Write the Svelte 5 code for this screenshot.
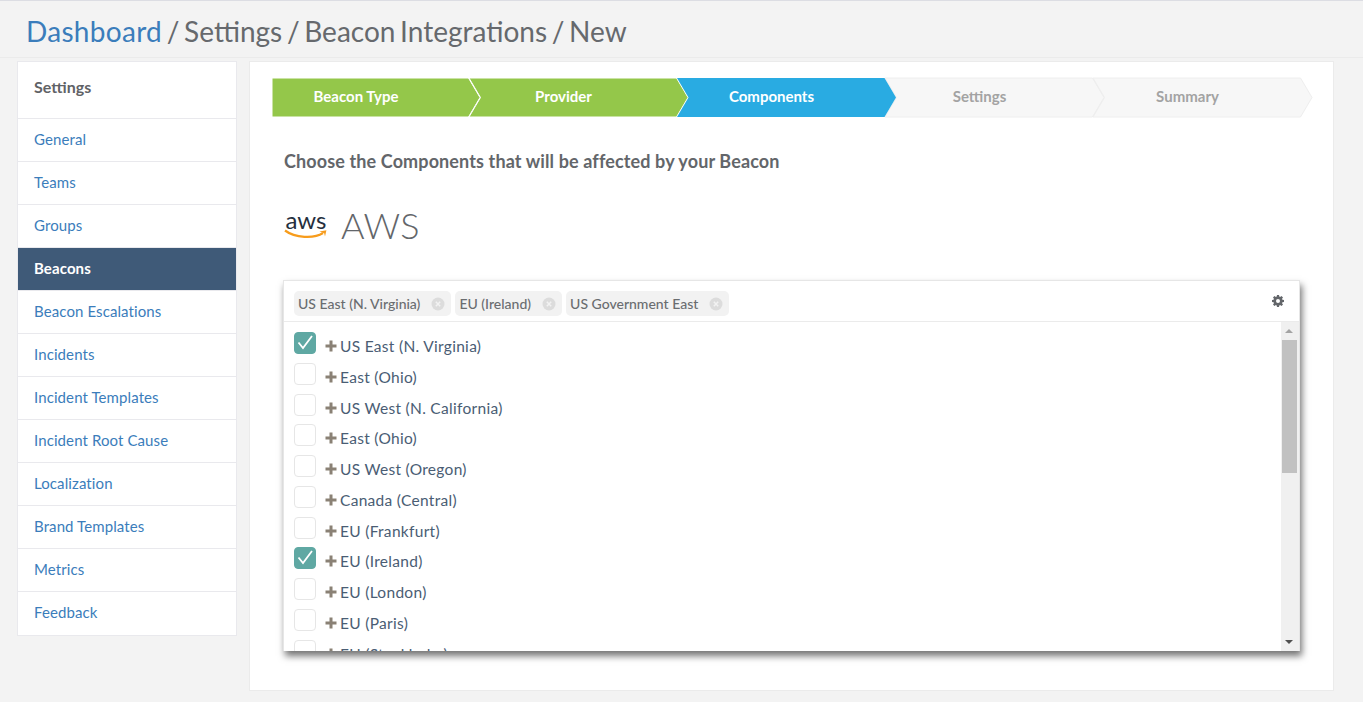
<script lang="ts">
  const navItems = ['General', 'Teams', 'Groups', 'Beacons', 'Beacon Escalations', 'Incidents', 'Incident Templates', 'Incident Root Cause', 'Localization', 'Brand Templates', 'Metrics', 'Feedback'];
  const steps = [
    { label: 'Beacon Type', state: 'done' },
    { label: 'Provider', state: 'done' },
    { label: 'Components', state: 'active' },
    { label: 'Settings', state: 'todo' },
    { label: 'Summary', state: 'todo' }
  ];
  const tags = ['US East (N. Virginia)', 'EU (Ireland)', 'US Government East'];
  const regions = [
    { name: 'US East (N. Virginia)', checked: true },
    { name: 'East (Ohio)', checked: false },
    { name: 'US West (N. California)', checked: false },
    { name: 'East (Ohio)', checked: false },
    { name: 'US West (Oregon)', checked: false },
    { name: 'Canada (Central)', checked: false },
    { name: 'EU (Frankfurt)', checked: false },
    { name: 'EU (Ireland)', checked: true },
    { name: 'EU (London)', checked: false },
    { name: 'EU (Paris)', checked: false },
    { name: 'EU (Stockholm)', checked: false }
  ];
</script>

<header class="page-header">
  <h1><a href="#top">Dashboard</a> / Settings / Beacon Integrations / New</h1>
</header>

<div class="layout">
  <aside class="sidebar">
    <div class="sidebar-title">Settings</div>
    {#each navItems as item}
      <a class="nav-item" class:active={item === 'Beacons'} href="#top">{item}</a>
    {/each}
  </aside>

  <main class="card">
    <ol class="steps">
      {#each steps as step, i}
        <li class="step {step.state}" class:first={i === 0}>
          {#if i === 0}
            <svg class="shape" viewBox="0 0 208 39" aria-hidden="true">
              <polygon points="0,0 196.5,0 208,19.5 196.5,39 0,39" />
            </svg>
          {:else}
            <svg class="shape" viewBox="0 0 219 39" aria-hidden="true">
              <polygon points="0,0 207.5,0 219,19.5 207.5,39 0,39 11.5,19.5" />
            </svg>
          {/if}
          <span>{step.label}</span>
        </li>
      {/each}
    </ol>

    <h2 class="prompt">Choose the Components that will be affected by your Beacon</h2>

    <div class="provider">
      <div class="aws-logo">
        <span>aws</span>
        <svg viewBox="0 0 44 12" aria-hidden="true">
          <path class="smile" d="M1 1.5C11 9 30 10 39 4" />
          <path class="arrow" d="M35.5 2.6L42.4 1.2 41 7.6 40.2 4.2z" />
        </svg>
      </div>
      <div class="provider-name">AWS</div>
    </div>

    <div class="picker">
      <div class="picker-head">
        <div class="tags">
          {#each tags as tag}
            <span class="tag">{tag}
              <svg viewBox="0 0 14 14" aria-hidden="true">
                <circle cx="7" cy="7" r="6.5" />
                <path d="M4.8 4.8l4.4 4.4M9.2 4.8l-4.4 4.4" />
              </svg>
            </span>
          {/each}
        </div>
        <svg class="gear" viewBox="0 0 24 24" aria-hidden="true">
          <path d="M10 0h4l.6 3.2 1.7.7L19 2l3 3-1.900 2.700.7 1.700L24 10v4l-3.200.6-.7 1.700L22 19l-3 3-2.700-1.900-1.700.7L14 24h-4l-.6-3.200-1.700-.7L5 22l-3-3 1.900-2.700-.7-1.700L0 14v-4l3.200-.6.7-1.700L2 5l3-3 2.700 1.900 1.700-.7zM12 8a4 4 0 1 0 0 8 4 4 0 0 0 0-8z" fill-rule="evenodd" />
        </svg>
      </div>
      <div class="picker-body">
        <ul class="regions">
          {#each regions as region}
            <li class="region">
              <span class="check" class:checked={region.checked}>
                {#if region.checked}
                  <svg viewBox="0 0 22 22" aria-hidden="true"><path d="M4.5 10.5l4.500 5.500 9-12" /></svg>
                {/if}
              </span>
              <svg class="plus" viewBox="0 0 12 12" aria-hidden="true"><path d="M4.5 .5h3v4h4v3h-4v4h-3v-4h-4v-3h4z" /></svg>
              <span class="region-name">{region.name}</span>
            </li>
          {/each}
        </ul>
        <div class="scrollbar">
          <i class="arrow-up"></i>
          <b class="thumb"></b>
          <i class="arrow-down"></i>
        </div>
      </div>
    </div>
  </main>
</div>

<style>
  :global(body) {
    margin: 0;
    background: #f3f3f3;
    font-family: Lato, "Open Sans", sans-serif;
    color: #5f6266;
  }

  a {
    text-decoration: none;
  }

  .page-header {
    height: 58px;
    box-sizing: border-box;
    border-top: 1px solid #dcdde3;
    border-bottom: 1px solid #ebebeb;
    padding: 11px 26px 0;
  }

  h1 {
    margin: 0;
    font-size: 28px;
    line-height: 38px;
    font-weight: 400;
    color: #66696d;
    word-spacing: -2.5px;
  }

  h1 a {
    color: #3b7dbb;
    letter-spacing: 0.3px;
  }

  .layout {
    display: flex;
    align-items: flex-start;
    gap: 12px;
    padding: 3px 29px 0 17px;
  }

  .sidebar {
    width: 220px;
    flex: none;
    box-sizing: border-box;
    background: #fff;
    border: 1px solid #e9e9ed;
    padding-bottom: 1px;
    display: flex;
    flex-direction: column;
  }

  .sidebar-title {
    height: 56px;
    padding: 15px 16px 0;
    box-sizing: border-box;
    font-size: 16px;
    line-height: 20px;
    font-weight: 700;
    color: #5f6266;
  }

  .nav-item {
    height: 43px;
    box-sizing: border-box;
    border-top: 1px solid #e9e9ed;
    padding: 10px 16px 0;
    font-size: 15px;
    line-height: 20px;
    letter-spacing: 0.1px;
    color: #3b7dbb;
  }

  .nav-item.active {
    background: #3f5a78;
    color: #fff;
    font-weight: 700;
  }

  .card {
    flex: 1;
    height: 630px;
    box-sizing: border-box;
    background: #fff;
    border: 1px solid #ebebeb;
    padding: 16px 22px 0;
  }

  .steps {
    list-style: none;
    margin: 0;
    padding: 0;
    display: flex;
    height: 39px;
  }

  .step {
    position: relative;
    width: 219px;
    flex: none;
    margin-right: -11px;
    box-sizing: border-box;
    padding: 0 30px 3px 0;
    display: flex;
    align-items: center;
    justify-content: center;
    font-size: 15px;
    font-weight: 700;
  }

  .step.first {
    width: 208px;
    padding-right: 40px;
  }

  .step span {
    position: relative;
  }

  .shape {
    position: absolute;
    inset: 0;
    width: 100%;
    height: 39px;
    overflow: visible;
  }

  .done {
    color: #fff;
  }

  .done polygon {
    fill: #94c74a;
    stroke: #fff;
    stroke-width: 1;
  }

  .active {
    color: #fff;
    z-index: 1;
  }

  .active polygon {
    fill: #29abe2;
  }

  .todo {
    color: #a3a3a3;
  }

  .todo polygon {
    fill: #f7f7f7;
    stroke: #eeeeee;
    stroke-width: 1;
  }

  .prompt {
    margin: 33px 0 0 12px;
    font-size: 18px;
    line-height: 22px;
    font-weight: 700;
    letter-spacing: 0.12px;
    color: #63666a;
  }

  .provider {
    display: flex;
    align-items: center;
    gap: 13px;
    margin: 29px 0 0 12px;
    height: 48px;
  }

  .aws-logo {
    width: 44px;
    display: flex;
    flex-direction: column;
    align-items: center;
  }

  .aws-logo span {
    font-size: 24px;
    line-height: 19px;
    font-weight: 400;
    color: #252f3e;
  }

  .aws-logo svg {
    width: 44px;
    height: 12px;
  }

  .smile {
    fill: none;
    stroke: #f79c1c;
    stroke-width: 2.2;
  }

  .arrow {
    fill: #f79c1c;
  }

  .provider-name {
    font-size: 36px;
    line-height: 44px;
    font-weight: 300;
    color: #63666a;
    letter-spacing: 0.3px;
  }

  .picker {
    margin: 31px 11px 0;
    box-sizing: border-box;
    height: 371px;
    background: #fff;
    border: 1px solid #e6e6e6;
    border-width: 1px 1px 0;
    box-shadow: 2px 5px 7px rgba(0, 0, 0, 0.55);
    display: flex;
    flex-direction: column;
  }

  .picker-head {
    height: 41px;
    flex: none;
    box-sizing: border-box;
    border-bottom: 1px solid #ebebeb;
    padding: 10px 15px 0 10px;
    display: flex;
    justify-content: space-between;
  }

  .tags {
    display: flex;
    gap: 4px;
  }

  .tag {
    height: 25px;
    box-sizing: border-box;
    padding: 0 6px 0 4px;
    border-radius: 5px;
    background: #f2f2f2;
    display: flex;
    align-items: center;
    gap: 11px;
    font-size: 14px;
    font-weight: 500;
    color: #6a6d70;
  }

  .tag svg {
    width: 14px;
    height: 14px;
  }

  .tag circle {
    fill: #dcdcdc;
  }

  .tag path {
    stroke: #f2f2f2;
    stroke-width: 1.5;
  }

  .gear {
    width: 12px;
    height: 12px;
    margin-top: 4px;
    fill: #63666a;
  }

  .picker-body {
    flex: 1;
    min-height: 0;
    display: flex;
    overflow: hidden;
  }

  .regions {
    flex: 1;
    list-style: none;
    margin: 0;
    padding: 10px 0 0 10px;
  }

  .region {
    height: 30.75px;
    display: flex;
    align-items: flex-start;
  }

  .check {
    width: 22px;
    height: 22px;
    flex: none;
    box-sizing: border-box;
    border: 1px solid #e6e6e6;
    border-radius: 4px;
    background: #fff;
  }

  .check.checked {
    background: #5fa8a3;
    border-color: #5fa8a3;
  }

  .check svg {
    display: block;
    width: 22px;
    height: 22px;
    margin: -1px;
  }

  .check path {
    fill: none;
    stroke: #fff;
    stroke-width: 1.8;
  }

  .plus {
    width: 12px;
    height: 12px;
    flex: none;
    margin: 8px 3px 0 9px;
    fill: #8a8175;
  }

  .region-name {
    font-size: 15.5px;
    line-height: 20px;
    margin-top: 4px;
    letter-spacing: 0.3px;
    color: #4a5d74;
    white-space: nowrap;
  }

  .scrollbar {
    width: 18px;
    flex: none;
    background: #f0f0f0;
    position: relative;
  }

  .thumb {
    position: absolute;
    left: 1px;
    width: 15px;
    top: 18px;
    height: 133px;
    background: #c1c1c1;
  }

  .arrow-up,
  .arrow-down {
    position: absolute;
    left: 4px;
    width: 0;
    height: 0;
    border-left: 4px solid transparent;
    border-right: 4px solid transparent;
  }

  .arrow-up {
    top: 7px;
    border-bottom: 4px solid #a3a3a3;
  }

  .arrow-down {
    bottom: 7px;
    border-top: 4px solid #505050;
  }
</style>
